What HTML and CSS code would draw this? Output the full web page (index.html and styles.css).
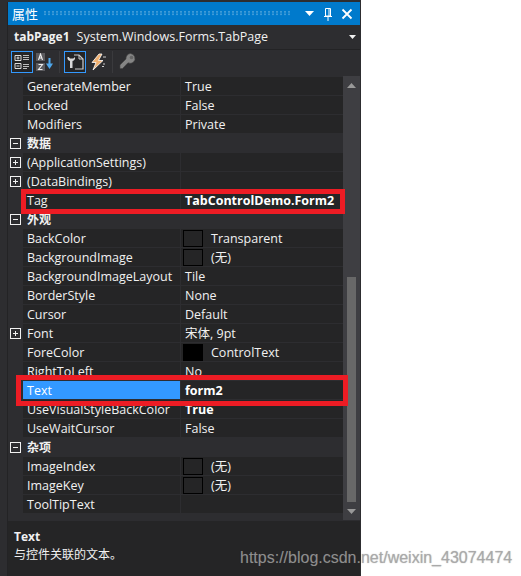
FILE: index.html
```html
<!DOCTYPE html>
<html lang="zh">
<head>
<meta charset="utf-8">
<title>属性</title>
<link rel="stylesheet" href="styles.css">
</head>
<body>
<div class="panel">
  <div class="window">
    <header class="title">
      <span class="title-text">属性</span>
      <span class="grip"></span>
      <svg class="t-icon" width="10" height="6" viewBox="0 0 10 6"><path d="M0 0h9L4.500 5z" fill="#fff"/></svg>
      <svg class="t-icon" width="10" height="14" viewBox="0 0 10 14"><path d="M2.500 1.500h5V9h-5zM1 9.500h8M5 9.500V14M6 2v7" fill="none" stroke="#fff"/></svg>
      <svg class="t-icon" width="12" height="12" viewBox="0 0 12 12"><path d="M1.500 1.500l9 9M10.500 1.500l-9 9" fill="none" stroke="#fff" stroke-width="1.800"/></svg>
    </header>
    <div class="selector">
      <b>tabPage1</b><span class="sel-type">System.Windows.Forms.TabPage</span>
      <svg class="sel-arrow" width="7" height="4" viewBox="0 0 7 4"><path d="M0 0h7L3.500 4z" fill="#f1f1f1"/></svg>
    </div>
    <div class="toolbar">
      <span class="tool on"><svg width="16" height="16" viewBox="0 0 16 16"><path d="M1 1.500h6v5H1zM1 9.500h6v5H1z" fill="none" stroke="#ddd"/><path d="M2.500 4h3M4 2.500v3M2.500 12h3" stroke="#ddd"/><path d="M9 1.500h6M9 3.500h6M9 5.500h6M9 10.500h6M9 12.500h6M9 14.500h4" stroke="#bbb"/></svg></span>
      <span class="tool plain"><svg width="18" height="18" viewBox="0 0 18 18"><path d="M0 0h9v8H0zM0 10h9v8H0z" fill="#5a5a5e"/><path d="M2.500 7l2-6 2 6M3.300 5h2.500M2.500 11.500h4l-4 5h4" fill="none" stroke="#eee" stroke-width="1.100"/><path d="M13.500 5v9" fill="none" stroke="#4ea6ea" stroke-width="2"/><path d="M10 10.500h7L13.500 16z" fill="#4ea6ea"/></svg></span>
      <i class="sep"></i>
      <span class="tool on"><svg width="18" height="18" viewBox="0 0 18 18"><path d="M8 2h5l4 4v10H9" fill="none" stroke="#ccc" stroke-width="1.200"/><path d="M13 2v4h4" fill="none" stroke="#ccc"/><path d="M1.500 4a3.500 3.500 0 0 0 2.500 4V15h2.500V8A3.500 3.500 0 0 0 9 4L7.300 5.500H4L2.800 4z" fill="#d8d8d8"/></svg></span>
      <span class="tool plain"><svg width="18" height="18" viewBox="0 0 18 18"><path d="M10 1L3 9.500h4L4 17l10-9.500H9.500L13 1z" fill="#f0b070" stroke="#fff" stroke-width=".8"/><path d="M14 4h3M14 11h2M13 13.500h2" stroke="#ccc"/></svg></span>
      <i class="sep"></i>
      <span class="tool"><svg width="18" height="20" viewBox="0 0 18 20"><path d="M11.500 1.500a5 5 0 0 1 3 8.500 5 5 0 0 1-5.500 .8L3.500 16.500H1v-3.500L7 7a5 5 0 0 1 4.500-5.500z" fill="#858585" stroke="#444" stroke-width=".6"/><circle cx="12.500" cy="5.500" r="1.800" fill="#666"/></svg></span>
    </div>

    <div class="body">
      <div class="grid">
        <div class="row"><span class="gut"></span><span class="name">GenerateMember</span><span class="val">True</span></div>
        <div class="row"><span class="gut"></span><span class="name">Locked</span><span class="val">False</span></div>
        <div class="row"><span class="gut"></span><span class="name">Modifiers</span><span class="val">Private</span></div>
        <div class="row cat"><span class="gut"><i class="box minus"></i></span><span class="cat-name">数据</span></div>
        <div class="row"><span class="gut"><i class="box plus"></i></span><span class="name">(ApplicationSettings)</span><span class="val"></span></div>
        <div class="row"><span class="gut"><i class="box plus"></i></span><span class="name">(DataBindings)</span><span class="val"></span></div>
        <div class="row"><span class="gut"></span><span class="name">Tag</span><span class="val strong">TabControlDemo.Form2</span></div>
        <div class="row cat"><span class="gut"><i class="box minus"></i></span><span class="cat-name">外观</span></div>
        <div class="row"><span class="gut"></span><span class="name">BackColor</span><span class="val"><i class="swatch"></i>Transparent</span></div>
        <div class="row"><span class="gut"></span><span class="name">BackgroundImage</span><span class="val"><i class="swatch"></i>(无)</span></div>
        <div class="row"><span class="gut"></span><span class="name">BackgroundImageLayout</span><span class="val">Tile</span></div>
        <div class="row"><span class="gut"></span><span class="name">BorderStyle</span><span class="val">None</span></div>
        <div class="row"><span class="gut"></span><span class="name">Cursor</span><span class="val">Default</span></div>
        <div class="row"><span class="gut"><i class="box plus"></i></span><span class="name">Font</span><span class="val">宋体, 9pt</span></div>
        <div class="row"><span class="gut"></span><span class="name">ForeColor</span><span class="val"><i class="swatch black"></i>ControlText</span></div>
        <div class="row"><span class="gut"></span><span class="name">RightToLeft</span><span class="val">No</span></div>
        <div class="row"><span class="gut"></span><span class="name selected">Text</span><span class="val strong">form2</span></div>
        <div class="row"><span class="gut"></span><span class="name">UseVisualStyleBackColor</span><span class="val strong">True</span></div>
        <div class="row"><span class="gut"></span><span class="name">UseWaitCursor</span><span class="val">False</span></div>
        <div class="row cat"><span class="gut"><i class="box minus"></i></span><span class="cat-name">杂项</span></div>
        <div class="row"><span class="gut"></span><span class="name">ImageIndex</span><span class="val"><i class="swatch"></i>(无)</span></div>
        <div class="row"><span class="gut"></span><span class="name">ImageKey</span><span class="val"><i class="swatch"></i>(无)</span></div>
        <div class="row"><span class="gut"></span><span class="name">ToolTipText</span><span class="val"></span></div>
      </div>
      <div class="scrollbar">
        <svg class="arrow" width="9" height="5" viewBox="0 0 9 5"><path d="M4.500 0L9 5H0z" fill="#999"/></svg>
        <div class="track"><div class="thumb"></div></div>
        <svg class="arrow" width="9" height="5" viewBox="0 0 9 5"><path d="M0 0h9L4.500 5z" fill="#999"/></svg>
      </div>
    </div>

    <div class="desc">
      <b>Text</b>
      <span>与控件关联的文本。</span>
    </div>
  </div>
</div>
<div class="mark mark-tag"></div>
<div class="mark mark-text"></div>
<div class="watermark">https://blog.csdn.net/weixin_43074474</div>
</body>
</html>
```

FILE: styles.css
```css
html, body { margin: 0; height: 100%; background: #fff; overflow: hidden; }
body { position: relative; font: 12px/18px "Open Sans", "Noto Sans CJK SC", sans-serif; color: #f1f1f1; }
.panel { width: 361px; height: 576px; box-sizing: border-box; background: #2d2d30; padding: 2px 1px 0 7px; }
.window { height: 100%; border-left: 1px solid #232325; display: flex; flex-direction: column; }
.title { height: 23px; flex: none; background: #007acc; display: flex; align-items: center; padding: 0 7px 0 4px; color: #fff; }
.title-text { font-size: 13px; }
.grip { flex: 1; height: 5px; margin: 0 6px; background-image: radial-gradient(circle at 1px 1px, #3f9bd8 .8px, transparent 1px); background-size: 4px 2.500px; }
.t-icon { margin-left: 8px; flex: none; }
.selector { height: 24px; flex: none; display: flex; align-items: center; padding: 0 4px 0 6px; border-bottom: 1px solid #232325; white-space: nowrap; font-size: 12.500px; }
.selector b { font-size: 12px; }
.sel-type { margin-left: 7px; flex: 1; }
.toolbar { height: 26px; flex: none; display: flex; align-items: flex-start; gap: 2px; padding: 0 0 0 3px; box-sizing: border-box; }
.tool { width: 22px; height: 22px; box-sizing: border-box; display: flex; align-items: center; justify-content: center; border: 1px solid transparent; flex: none; margin-top: 1px; }
.tool.on { border-color: #3399ff; background: #252526; }
.tool.plain { width: 20px; }
.sep { width: 1px; height: 22px; background: #3a3a3d; margin: 1px 2px 0; flex: none; }
.body { height: 444px; flex: none; display: flex; }
.grid { flex: 1; min-width: 0; padding-top: 1px; }
.row { height: 19px; display: flex; box-sizing: border-box; font-size: 12.500px; }
.gut { width: 15px; flex: none; display: flex; align-items: center; justify-content: center; }
.name { width: 158px; flex: none; box-sizing: border-box; padding: 1px 0 0 4px; background: #252526; border-bottom: 1px solid #2d2d30; border-right: 1px solid #2d2d30; white-space: nowrap; overflow: hidden; }
.val { flex: 1; min-width: 0; box-sizing: border-box; padding: 1px 0 0 4px; background: #252526; border-bottom: 1px solid #2d2d30; display: flex; align-items: flex-start; white-space: nowrap; overflow: hidden; }
.strong { font-weight: 700; color: #fff; }
.selected { background: #3399ff; color: #fff; }
.cat { background: #2d2d30; }
.cat-name { padding: 1px 0 0 4px; font-weight: 700; font-size: 12px; }
.box { position: relative; display: block; width: 9px; height: 9px; border: 1px solid #f1f1f1; }
.box::before { content: ""; position: absolute; left: 2px; top: 4px; width: 5px; height: 1px; background: #f1f1f1; }
.plus::after { content: ""; position: absolute; left: 4px; top: 2px; width: 1px; height: 5px; background: #f1f1f1; }
.swatch { width: 18px; height: 15px; border: 1px solid #000; margin: 0 8px 0 -2px; flex: none; }
.swatch.black { background: #000; }
.scrollbar { width: 17px; flex: none; background: #3e3e42; display: flex; flex-direction: column; align-items: center; }
.arrow { flex: none; margin: 7px 0 6px; }
.track { flex: 1; width: 9px; display: flex; flex-direction: column; justify-content: flex-end; }
.thumb { height: 225px; background: #686868; }
.desc { flex: 1; border-top: 1px solid #2d2d30; background: #252526; padding: 7px 6px 0; display: flex; flex-direction: column; }
.mark { position: absolute; box-sizing: border-box; border: 5px solid #ed1c24; }
.mark-tag { left: 21px; top: 189px; width: 324px; height: 25px; }
.mark-text { left: 16px; top: 375px; width: 332px; height: 31px; }
.watermark { position: absolute; left: 240px; top: 548px; font: 16px/20px "Liberation Sans", sans-serif; color: rgba(165,165,165,.8); text-shadow: 0 0 1px rgba(90,90,90,.5); white-space: nowrap; }
```
